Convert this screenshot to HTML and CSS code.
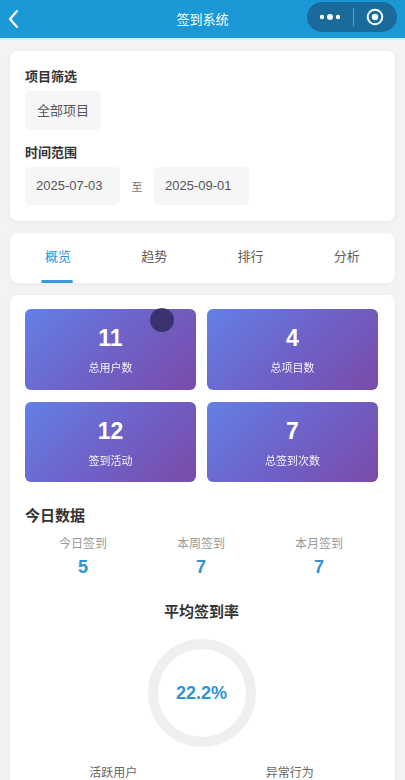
FILE: index.html
```html
<!DOCTYPE html>
<html lang="zh">
<head>
<meta charset="utf-8">
<title>签到系统</title>
<link rel="stylesheet" href="styles.css">
</head>
<body>
<header class="nav">
  <svg class="back" width="14" height="22" viewBox="0 0 14 22"><path d="M11 3 L4 11 L11 19" fill="none" stroke="#fff" stroke-width="2.2" stroke-linecap="round" stroke-linejoin="round"/></svg>
  <div class="nav-title">签到系统</div>
  <div class="capsule">
    <svg class="dots" width="22" height="8" viewBox="0 0 22 8"><circle cx="3" cy="4" r="2.2" fill="#fff"/><circle cx="11" cy="4" r="3" fill="#fff"/><circle cx="19" cy="4" r="2.2" fill="#fff"/></svg>
    <span class="cap-line"></span>
    <svg class="target" width="18" height="18" viewBox="0 0 18 18"><circle cx="9" cy="9" r="7.3" fill="none" stroke="#fff" stroke-width="2"/><circle cx="9" cy="9" r="3.2" fill="#fff"/></svg>
  </div>
</header>

<main class="page">
  <section class="card filter">
    <div class="label">项目筛选</div>
    <div class="row"><div class="chip">全部项目</div></div>
    <div class="label label2">时间范围</div>
    <div class="row">
      <div class="chip date">2025-07-03</div>
      <span class="to">至</span>
      <div class="chip date">2025-09-01</div>
    </div>
  </section>

  <nav class="card tabs">
    <div class="tab active">概览</div>
    <div class="tab">趋势</div>
    <div class="tab">排行</div>
    <div class="tab">分析</div>
  </nav>

  <section class="card content">
    <div class="stats">
      <div class="stat"><div class="num">11</div><div class="cap">总用户数</div></div>
      <div class="stat"><div class="num">4</div><div class="cap">总项目数</div></div>
      <div class="stat"><div class="num">12</div><div class="cap">签到活动</div></div>
      <div class="stat"><div class="num">7</div><div class="cap">总签到次数</div></div>
    </div>

    <h3 class="sec">今日数据</h3>
    <div class="today">
      <div class="col"><div class="t-lab">今日签到</div><div class="t-val">5</div></div>
      <div class="col"><div class="t-lab">本周签到</div><div class="t-val">7</div></div>
      <div class="col"><div class="t-lab">本月签到</div><div class="t-val">7</div></div>
    </div>

    <h3 class="sec center">平均签到率</h3>
    <div class="ring-wrap">
      <div class="ring"><span class="rate">22.2%</span></div>
    </div>

    <div class="bottom">
      <div class="b-col">活跃用户</div>
      <div class="b-col">异常行为</div>
    </div>
  </section>
</main>

<div class="touch"></div>
</body>
</html>
```

FILE: styles.css
```css
* { box-sizing: border-box; }
html, body { margin: 0; padding: 0; }
body {
  background: #f3f3f3;
  font-family: "Liberation Sans", "Noto Sans CJK SC", sans-serif;
  color: #333;
  width: 405px;
  height: 780px;
  overflow: hidden;
  position: relative;
}

.nav {
  height: 40px;
  background: #1b98d6;
  border-bottom: 2px solid #c8f0ff;
  display: flex;
  align-items: center;
  position: relative;
}
.back { position: absolute; left: 6px; top: 8px; }
.nav-title {
  flex: 1;
  text-align: center;
  color: #fff;
  font-size: 13px;
  margin-top: -2px;
}
.capsule {
  position: absolute;
  right: 8px;
  top: 2px;
  width: 90px;
  height: 30px;
  border-radius: 15px;
  background: #1a6a9c;
  display: flex;
  align-items: center;
}
.dots { margin-left: 12px; }
.cap-line { width: 1px; height: 18px; background: rgba(255,255,255,0.35); margin-left: 12px; }
.target { margin-left: 12px; }

.page {
  padding: 11px 10px 0;
  display: flex;
  flex-direction: column;
  gap: 12px;
}
.card {
  background: #fff;
  border-radius: 8px;
  box-shadow: 0 1px 4px rgba(0,0,0,0.05);
}

.filter { padding: 17px 15px 16px; }
.label { font-size: 13px; font-weight: bold; color: #333; line-height: 18px; }
.label2 { margin-top: 14px; }
.row { display: flex; align-items: center; margin-top: 5px; }
.chip {
  background: #f6f6f6;
  border-radius: 5px;
  font-size: 13px;
  color: #555;
  height: 39px;
  line-height: 39px;
  padding: 0 12px;
}
.chip.date { width: 95px; height: 38px; line-height: 38px; padding: 0 0 0 11px; }
.to { font-size: 11px; color: #777; width: 34px; text-align: center; }

.tabs {
  height: 50px;
  display: flex;
  position: relative;
}
.tab {
  flex: 1;
  text-align: center;
  font-size: 13px;
  color: #5e5e5e;
  line-height: 48px;
  position: relative;
}
.tab.active { color: #2e93d3; }
.tab.active::after {
  content: "";
  position: absolute;
  left: 50%;
  bottom: 0;
  width: 32px;
  margin-left: -17px;
  height: 3px;
  border-radius: 2px;
  background: #3a9ad8;
}

.content { padding: 14px 17px 20px 15px; min-height: 500px; }
.stats {
  display: grid;
  grid-template-columns: 171px 171px;
  column-gap: 11px;
  row-gap: 12px;
}
.stat {
  height: 81px;
  border-radius: 6px;
  background: linear-gradient(135deg, #6380e6 0%, #6e62c8 50%, #7a4ba8 100%);
  color: #fff;
  text-align: center;
  padding-top: 15px;
}
.stat:nth-child(n+3) { height: 80px; }
.num { font-size: 23px; font-weight: bold; line-height: 28px; }
.cap { font-size: 11px; line-height: 14px; margin-top: 9px; opacity: 0.92; }

.sec {
  margin: 24px 0 0;
  font-size: 15px;
  font-weight: bold;
  color: #333;
  line-height: 20px;
}
.sec.center { text-align: center; margin-top: 24px; }

.today {
  display: grid;
  grid-template-columns: repeat(3, 118px);
  margin-top: 10px;
  margin-left: -1px;
}
.col { text-align: center; }
.t-lab { font-size: 12px; color: #999; line-height: 16px; }
.t-val { font-size: 18px; font-weight: bold; color: #2e93d3; line-height: 22px; margin-top: 4px; }

.ring-wrap { display: flex; justify-content: center; margin-top: 17px; }
.ring {
  width: 108px;
  height: 108px;
  border-radius: 50%;
  border: 10px solid #efefef;
  display: flex;
  align-items: center;
  justify-content: center;
}
.rate { font-size: 18px; font-weight: bold; color: #2e93d3; }

.bottom {
  display: grid;
  grid-template-columns: 1fr 1fr;
  margin-top: 18px;
}
.b-col { text-align: center; font-size: 12px; color: #666; line-height: 16px; }

.touch {
  position: absolute;
  left: 150px;
  top: 308px;
  width: 24px;
  height: 24px;
  border-radius: 50%;
  background: rgba(45, 40, 90, 0.8);
  filter: blur(0.6px);
}
```
